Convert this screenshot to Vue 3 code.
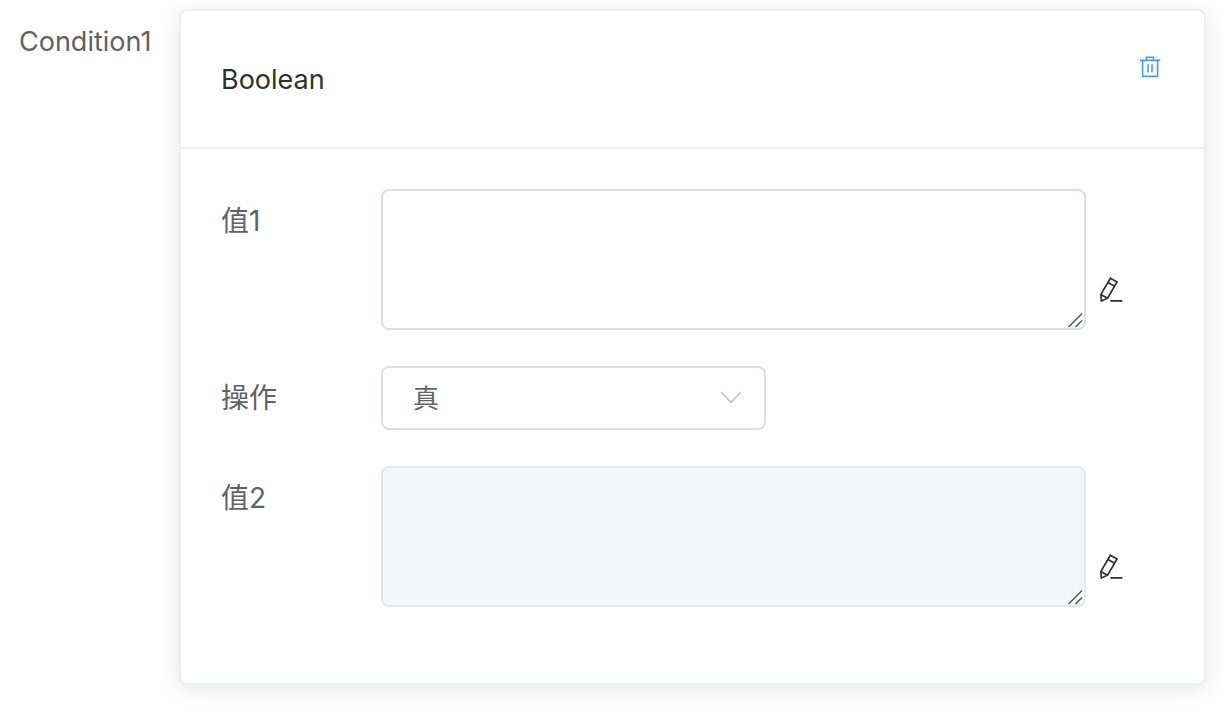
<script setup>
import { ref } from 'vue'

const value1 = ref('')
const value2 = ref('')
const operation = ref('true')
</script>

<template>
  <form class="condition" @submit.prevent>
    <div class="condition-label">Condition1</div>
    <section class="card">
      <header class="card-header">
        <span class="card-title">Boolean</span>
        <button class="icon-button delete" type="button" aria-label="Delete">
          <svg width="24" height="24" viewBox="0 0 24 24" fill="none" stroke="currentColor" stroke-width="1.6">
            <path d="M2 5.4H22.2M4.6 5.4V21.4H19.6V5.4M8.5 5.4V2.2H15.5V5.4M10 9.3V17.5M14 9.3V17.5" />
          </svg>
        </button>
      </header>
      <div class="card-body">
        <div class="row">
          <label class="label" for="value1">值1</label>
          <div class="area">
            <textarea id="value1" v-model="value1"></textarea>
            <svg class="grip" width="16" height="16" viewBox="0 0 16 16" fill="none" stroke="#545454" stroke-width="1.5">
              <path d="M1.5 15L15 1.5M8.5 15L15 8.5" />
            </svg>
          </div>
          <button class="icon-button edit" type="button" aria-label="Edit 值1">
            <svg width="28" height="28" viewBox="0 0 28 28" fill="none" stroke="currentColor" stroke-width="1.7">
              <path d="M13.4 2.2L20 6L10.6 22.2L4.4 25L3.9 18.4ZM11 6.4L17.6 10.2M3.9 18.4L10.6 22.2M13.4 24.8H25.4" />
            </svg>
          </button>
        </div>
        <div class="row">
          <label class="label" for="operation">操作</label>
          <div class="select">
            <select id="operation" v-model="operation">
              <option value="true">真</option>
              <option value="false">假</option>
            </select>
            <svg class="chevron" width="22" height="16" viewBox="0 0 22 16" fill="none" stroke="#c0c4cc" stroke-width="1.7">
              <path d="M1 2L11 12.3L21 2" />
            </svg>
          </div>
        </div>
        <div class="row">
          <label class="label" for="value2">值2</label>
          <div class="area">
            <textarea id="value2" v-model="value2" disabled></textarea>
            <svg class="grip" width="16" height="16" viewBox="0 0 16 16" fill="none" stroke="#545454" stroke-width="1.5">
              <path d="M1.5 15L15 1.5M8.5 15L15 8.5" />
            </svg>
          </div>
          <button class="icon-button edit" type="button" aria-label="Edit 值2">
            <svg width="28" height="28" viewBox="0 0 28 28" fill="none" stroke="currentColor" stroke-width="1.7">
              <path d="M13.4 2.2L20 6L10.6 22.2L4.4 25L3.9 18.4ZM11 6.4L17.6 10.2M3.9 18.4L10.6 22.2M13.4 24.8H25.4" />
            </svg>
          </button>
        </div>
      </div>
    </section>
  </form>
</template>

<style>
body {
  background: #fff;
}
</style>

<style scoped>
.condition,
.condition * {
  box-sizing: border-box;
}

.condition {
  display: flex;
  align-items: flex-start;
  padding: 9px 24px 28px 19px;
  font-family: Inter, "Noto Sans CJK SC", sans-serif;
  font-size: 28px;
  color: #606266;
}

.condition-label {
  flex: 0 0 160px;
  font-size: 27px;
  line-height: 66px;
}

.card {
  flex: 1;
  min-width: 0;
  border: 2px solid #ebeef5;
  border-radius: 8px;
  background: #fff;
  box-shadow: 0 4px 24px rgba(0, 0, 0, 0.1);
}

.card-header {
  display: flex;
  justify-content: space-between;
  align-items: flex-start;
  padding: 36px 40px 34px;
  border-bottom: 2px solid #ebeef5;
}

.card-title {
  font-size: 27px;
  line-height: 66px;
  color: #303133;
}

.icon-button {
  display: flex;
  padding: 0;
  border: 0;
  background: none;
  cursor: pointer;
}

.delete {
  margin: 8px 2px 0 0;
  color: #409eff;
}

.card-body {
  display: flex;
  flex-direction: column;
  gap: 36px;
  padding: 40px 40px 76px;
}

.row {
  display: flex;
  align-items: flex-start;
}

.label {
  flex: 0 0 160px;
  line-height: 64px;
}

.area {
  position: relative;
  flex: 0 1 705px;
  display: flex;
}

textarea {
  width: 100%;
  height: 141px;
  padding: 10px 30px;
  border: 2px solid #dcdfe6;
  border-radius: 8px;
  background: #fff;
  font: inherit;
  color: inherit;
  resize: none;
}

textarea:disabled {
  border-color: #e4e7ed;
  background: #f5f7fa;
}

.grip {
  position: absolute;
  right: 3px;
  bottom: 2px;
  pointer-events: none;
}

.edit {
  align-self: flex-end;
  margin: 0 0 26px 11px;
  color: #303133;
}

.select {
  position: relative;
  flex: 0 1 385px;
}

select {
  display: block;
  width: 100%;
  height: 64px;
  padding: 0 60px 0 30px;
  border: 2px solid #dcdfe6;
  border-radius: 8px;
  background: #fff;
  font: inherit;
  font-size: 26px;
  color: inherit;
  appearance: none;
}

.chevron {
  position: absolute;
  top: 24px;
  right: 24px;
  pointer-events: none;
}
</style>
